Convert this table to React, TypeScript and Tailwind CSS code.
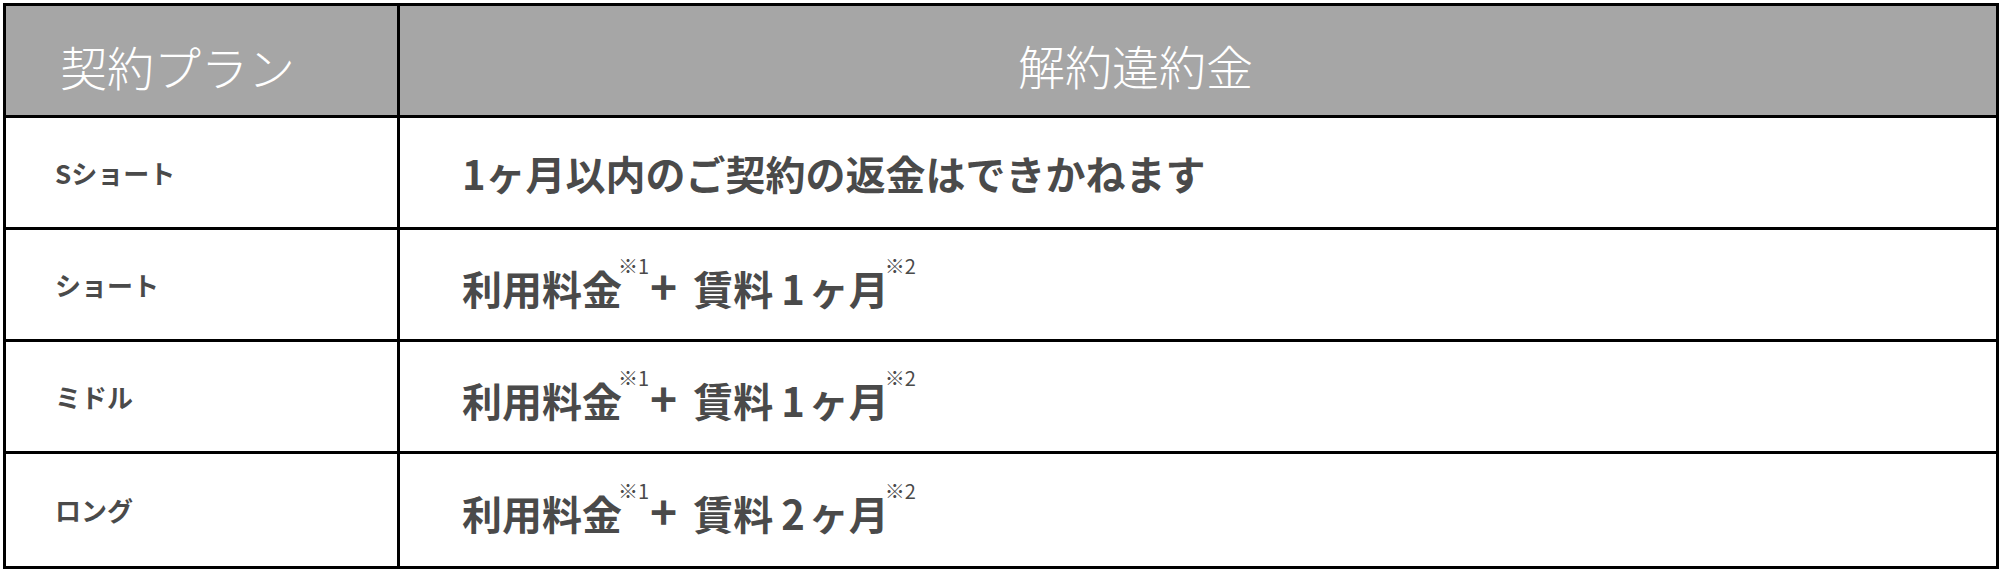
const font = { fontFamily: '"Noto Sans CJK JP", "Noto Sans", sans-serif' }

const rows = [
  { plan: "Sショート", fee: "1ヶ月以内のご契約の返金はできかねます", months: null as string | null },
  { plan: "ショート", fee: null, months: "1" },
  { plan: "ミドル", fee: null, months: "1" },
  { plan: "ロング", fee: null, months: "2" },
]

function Note({ children }: { children: string }) {
  return <span className="relative -top-[31px] -ml-[4px] text-[20px] font-normal">{children}</span>
}

export default function App() {
  return (
    <div className="w-[2000px] h-[570px] bg-white pt-[3px] pl-[3px]" style={font}>
      <div className="w-[1996px] border-[3px] border-black">
        {/* Header */}
        <div className="flex h-[112px] border-b-[3px] border-black bg-[#a6a6a6] text-white">
          <div className="w-[394px] flex-none border-r-[3px] border-black flex items-center pl-[54px] pt-[10px] text-[47px] font-light leading-none">
            契約プラン
          </div>
          <div className="flex-1 flex items-center pl-[618px] pt-[8px] text-[47px] font-light leading-none">
            解約違約金
          </div>
        </div>

        {/* Body */}
        {rows.map((row, idx) => (
          <div
            key={idx}
            className={`flex h-[112px] text-[#4a4a4a] ${idx < rows.length - 1 ? "border-b-[3px] border-black" : ""}`}
          >
            <div className="w-[394px] flex-none border-r-[3px] border-black flex items-center pl-[49px] text-[26px] font-bold leading-none">
              {row.plan}
            </div>
            <div className="flex-1 flex items-center pl-[62px] text-[40px] font-bold leading-none whitespace-nowrap">
              {row.fee ? (
                row.fee
              ) : (
                <span>
                  利用料金<Note>※1</Note>
                  <span className="text-[46px] ml-[1px] mr-[16px]">+</span>
                  賃料<span className="ml-[8px] mr-[4px]">{row.months}</span>ヶ月<Note>※2</Note>
                </span>
              )}
            </div>
          </div>
        ))}
      </div>
    </div>
  )
}
